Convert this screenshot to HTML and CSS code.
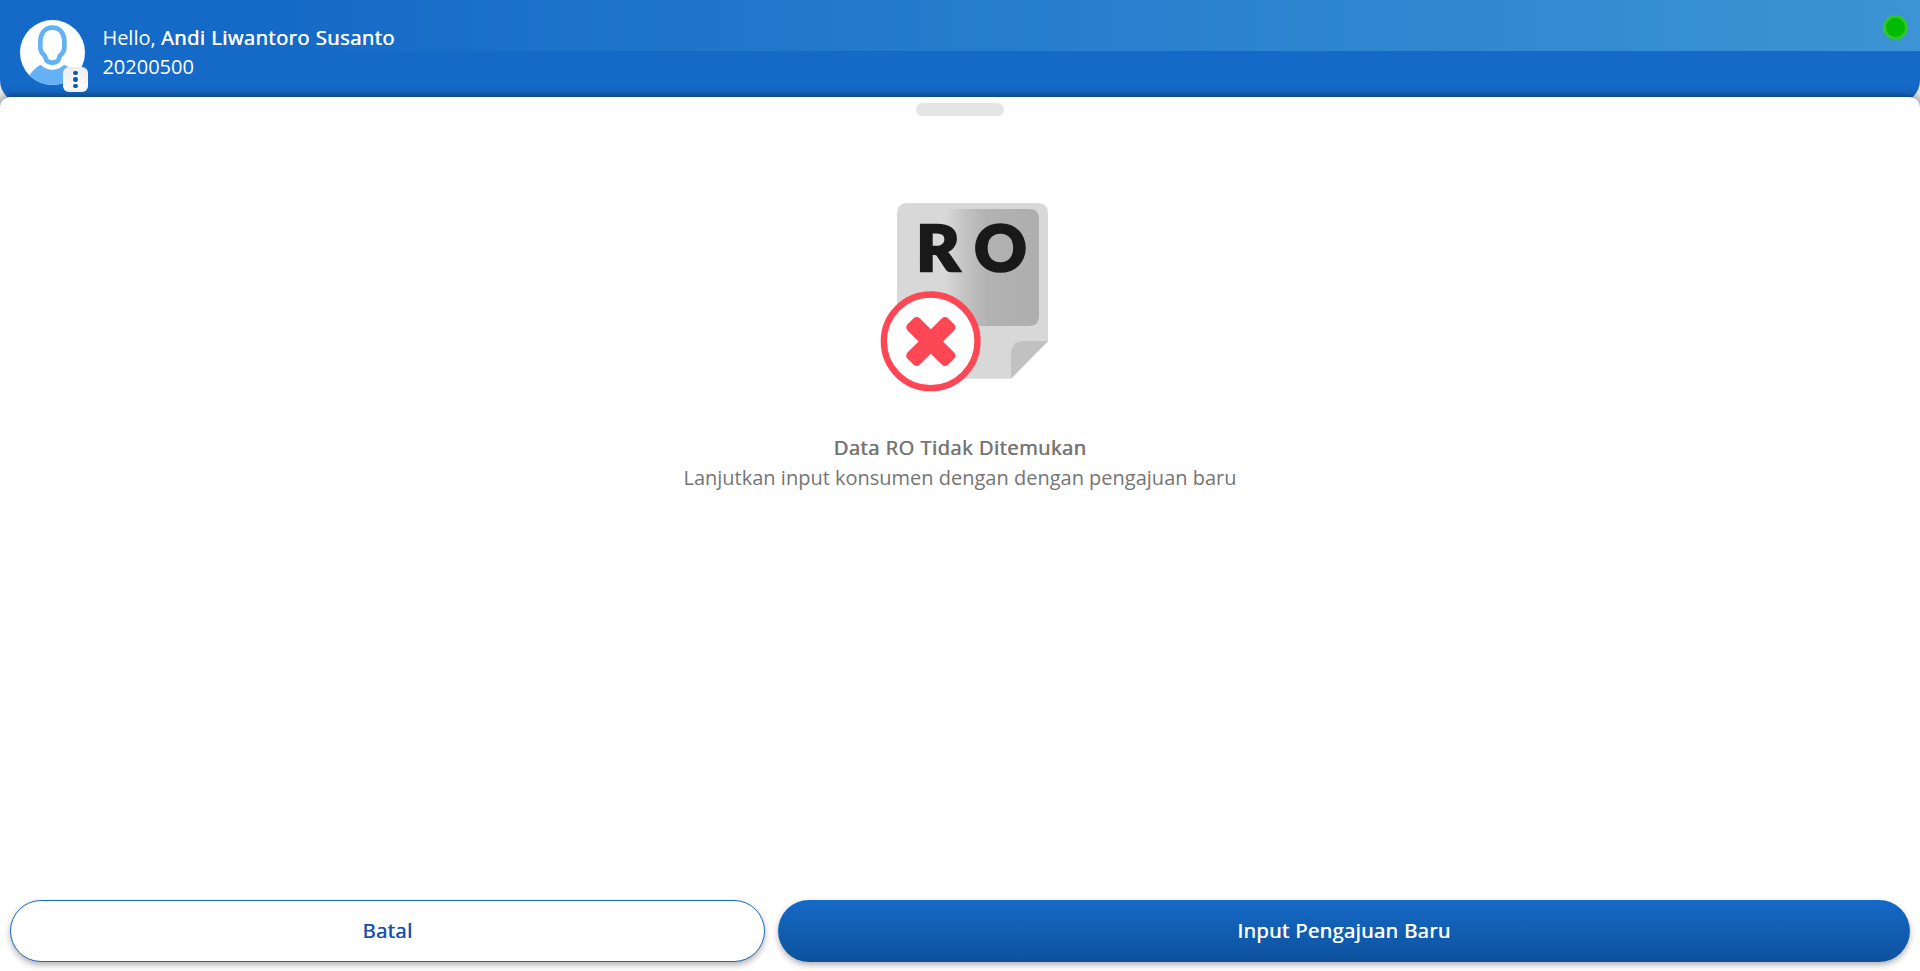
FILE: index.html
```html
<!DOCTYPE html>
<html lang="id">
<head>
<meta charset="utf-8">
<title>Data RO</title>
<link rel="stylesheet" href="styles.css">
</head>
<body>
<div class="app">
  <header class="header">
    <div class="header-glow"></div>
    <div class="profile">
      <div class="avatar">
        <svg class="avatar-img" viewBox="0 0 195 195">
          <clipPath id="round"><circle cx="97.500" cy="97.500" r="97.500"/></clipPath>
          <circle cx="97.500" cy="97.500" r="97.500" fill="#fff"/>
          <g clip-path="url(#round)">
            <path d="M20 180C32 156 46 142 62 134C82 154 112 154 132 134C154 144 170 158 180 180V200H20Z" fill="#64b1f5"/>
            <path d="M97 23C72 23 61 43 61 64V84C61 96 66 100 74 107C78 113 75 120 84 125Q97 131 110 125C119 120 116 113 120 107C128 100 133 96 133 84V64C133 43 122 23 97 23Z" fill="#fff" stroke="#64b1f5" stroke-width="14"/>
          </g>
        </svg>
        <span class="menu-badge"><i class="dot"></i><i class="dot"></i><i class="dot"></i></span>
      </div>
      <div class="user">
        <div>Hello, <b class="user-name">Andi Liwantoro Susanto</b></div>
        <div>20200500</div>
      </div>
    </div>
    <span class="status"></span>
  </header>
  <main class="sheet">
    <div class="handle"></div>
    <svg class="picture" viewBox="0 0 630 630">
      <defs>
        <linearGradient id="shade" x1="255" x2="537" gradientUnits="userSpaceOnUse">
          <stop offset="0" stop-color="#d8d8d8"/>
          <stop offset=".2" stop-color="#c4c4c4"/>
          <stop offset=".45" stop-color="#b2b2b2"/>
          <stop offset="1" stop-color="#aeaeae"/>
        </linearGradient>
      </defs>
      <path d="M111 72Q111 39 144 39H531Q564 39 564 72V454L453 566H111Z" fill="#d8d8d8"/>
      <path d="M250 57H508Q537 57 537 86V379Q537 408 508 408H250Z" fill="url(#shade)"/>
      <path d="M564 453H493Q453 453 453 493V566Z" fill="#c1c1c1"/>
      <text class="letters" x="169" y="243" textLength="130" lengthAdjust="spacingAndGlyphs">R</text>
      <text class="letters" x="343" y="243" textLength="157" lengthAdjust="spacingAndGlyphs">O</text>
      <circle cx="212" cy="454" r="140.500" fill="#fff" stroke="#fd4755" stroke-width="19"/>
      <g fill="#fd4755" transform="translate(212.500 454.500)">
        <rect x="-86" y="-26" width="172" height="52" rx="13" transform="rotate(45)"/>
        <rect x="-86" y="-26" width="172" height="52" rx="13" transform="rotate(-45)"/>
      </g>
    </svg>
    <div class="message">
      <div class="message-title">Data RO Tidak Ditemukan</div>
      <div>Lanjutkan input konsumen dengan dengan pengajuan baru</div>
    </div>
    <div class="actions">
      <button class="btn btn-cancel">Batal</button>
      <button class="btn btn-submit">Input Pengajuan Baru</button>
    </div>
  </main>
</div>
</body>
</html>
```
FILE: styles.css
```css
* { box-sizing: border-box; }
body { margin: 0; font: 20px/29px "Open Sans", sans-serif; background: #e6e8e9; }
.app { height: 971px; display: flex; flex-direction: column; overflow: hidden; }
.header {
  position: relative;
  flex: none;
  height: 104px;
  margin-bottom: -7px;
  padding: 20px;
  background: #1569c7;
  border-radius: 0 0 24px 24px;
  overflow: hidden;
}
.header-glow {
  position: absolute;
  inset: 0 0 auto 0;
  height: 51px;
  background: linear-gradient(90deg, #1569c7 12%, #3c94d4 100%);
}
.profile { position: relative; display: flex; gap: 17.400px; }
.avatar { position: relative; width: 65px; height: 65px; }
.avatar-img { display: block; width: 65px; height: 65px; }
.menu-badge {
  position: absolute;
  left: 43px;
  top: 47px;
  width: 25px;
  height: 25px;
  border-radius: 6px;
  background: linear-gradient(#ececec, #fff);
  display: flex;
  flex-direction: column;
  align-items: center;
  justify-content: center;
  gap: 2px;
}
.dot { width: 4.500px; height: 4.500px; border-radius: 50%; background: #0d5aa7; }
.user { color: #fff; padding-top: 3px; }
.user-name, .message-title {
  font-weight: 400;
  letter-spacing: .56px;
  text-shadow: .6px 0 0 currentColor;
}
.status {
  position: absolute;
  right: 12px;
  top: 15px;
  width: 25px;
  height: 25px;
  border: 3px solid #31c631;
  border-radius: 50%;
  background: #00bb00;
}
.sheet {
  position: relative;
  flex: 1;
  display: flex;
  flex-direction: column;
  align-items: center;
  padding: 6px 10px 9px;
  background: #fff;
  border-radius: 10px 10px 0 0;
  box-shadow: 0 0 10px rgba(0, 0, 0, .6);
}
.handle { flex: none; width: 88px; height: 13px; border-radius: 7px; background: #e4e4e4; }
.picture { flex: none; width: 210px; height: 210px; margin: 74px 0 0 10px; }
.letters { font: 900 191px Lato, sans-serif; fill: #191919; stroke: #191919; stroke-width: 8px; }
.message { margin-top: 33px; text-align: center; color: #757575; line-height: 30px; }
.actions {
  width: 100%;
  margin-top: auto;
  display: grid;
  grid-template-columns: 755px 1fr;
  gap: 13px;
}
.btn {
  height: 62px;
  padding: 0 0 2px;
  border: 0;
  border-radius: 31px;
  font: 400 20px "Open Sans", sans-serif;
  letter-spacing: .54px;
  text-shadow: .6px 0 0 currentColor;
  box-shadow: 0 3px 6px rgba(0, 0, 0, .3);
}
.btn-cancel { background: #fff; border: 1px solid #1569c7; color: #154fb0; }
.btn-submit { background: linear-gradient(#1569c7, #0d529d); color: #fff; }
```
